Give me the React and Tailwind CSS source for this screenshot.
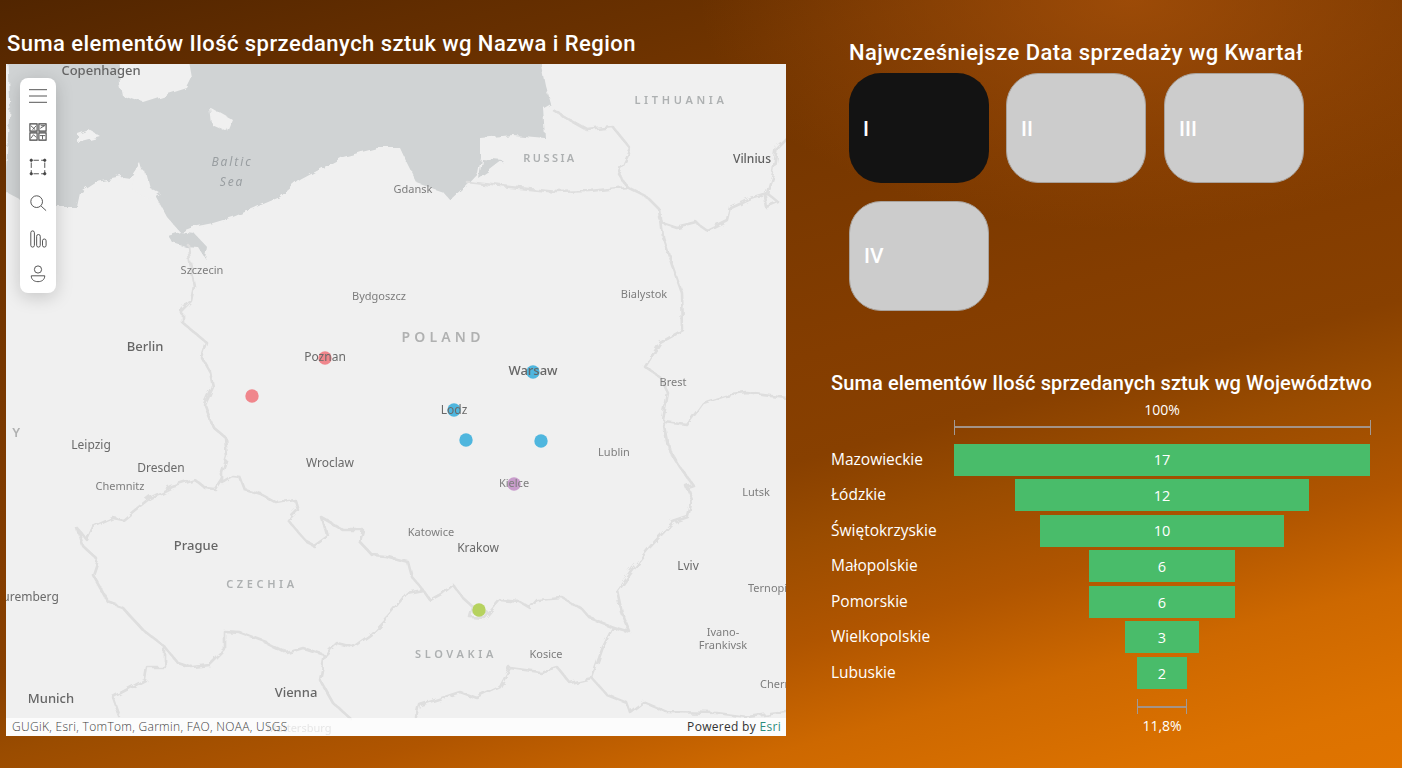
const borders = [
  // Odra, southern border of Poland, eastern border
  "M188 245 L190 262 L195 287 L192 302 L182 312 L182 322 L195 333 L207 343 L202 358 L210 372 L213 387 L205 405 L213 427 L225 437 L227 457 L222 473 L222 482 L232 476 L240 477 L245 490 L262 495 L277 503 L295 500 L298 510 L288 520 L298 532 L307 542 L313 545 L327 535 L322 518 L343 530 L363 530 L360 542 L372 555 L385 556 L408 562 L412 577 L423 590 L430 600 L443 593 L453 585 L463 598 L473 607 L470 617 L485 618 L500 600 L520 602 L530 608 L537 600 L563 598 L583 610 L590 618 L613 627 L630 632 L622 613 L617 590 L633 568 L650 547 L673 522 L688 517 L692 500 L687 487 L693 485 L680 467 L668 447 L663 420 L668 393 L660 377 L645 367 L660 343 L683 330 L682 293 L672 265 L663 237 L660 210 L647 197 L627 187 L590 191 L557 192 L510 187 L467 182",
  // Lithuania / Kaliningrad
  "M627 187 L618 173 L630 148 L613 127 L588 130 L570 120 L553 110",
  // Lithuania / Belarus
  "M660 218 L662 223 L677 228 L697 223 L707 230 L727 220 L730 207 L750 198 L767 193 L773 173 L777 147 L787 137",
  "M767 193 L779 203 L767 208 L765 196",
  // Belarus / Ukraine
  "M665 422 L687 425 L703 403 L725 396 L747 393 L787 398",
  // Germany / Czechia
  "M195 480 L172 487 L150 498 L135 510 L123 520 L113 518 L93 527 L87 540 L77 528 L82 545 L98 560 L93 575 L108 602 L122 607 L143 630 L165 647 L177 662 L192 667 L210 665 L225 650 L225 632 L240 633 L267 643 L287 653 L303 648 L325 655 L337 643 L353 647 L370 635 L387 617 L407 593 L423 590",
  // Germany / Austria
  "M165 648 L165 667 L147 667 L145 680 L113 697 L120 717",
  // Austria / Slovakia
  "M325 655 L320 680 L333 703 L350 718",
  // Slovakia / Hungary
  "M417 718 L420 705 L460 692 L477 698 L500 687 L510 668 L540 672 L557 667 L570 683 L592 678 L603 647 L613 627",
  // Hungary / Ukraine / Romania
  "M592 678 L607 695 L627 703 L630 712 L643 702 L667 712 L717 713 L747 717 L787 712",
  // Czech-Poland loop
  "M195 480 L205 488 L215 489 L222 478",
];

const labels = [
  ["Copenhagen", 101, 75, "big"],
  ["Gdansk", 413, 193, "small"],
  ["RUSSIA", 550, 162, "region"],
  ["LITHUANIA", 681, 104, "country"],
  ["Vilnius", 752, 163, "city"],
  ["Szczecin", 202, 274, "small"],
  ["Bydgoszcz", 379, 300, "small"],
  ["Bialystok", 644, 298, "small"],
  ["Berlin", 145, 351, "big"],
  ["Poznan", 325, 361, "name"],
  ["Warsaw", 533, 375, "big"],
  ["Brest", 673, 386, "small"],
  ["Lodz", 454, 414, "name"],
  ["Leipzig", 91, 449, "name"],
  ["Dresden", 161, 472, "name"],
  ["Lublin", 614, 456, "small"],
  ["Wroclaw", 330, 467, "name"],
  ["Kielce", 514, 487, "small"],
  ["Chemnitz", 120, 490, "small"],
  ["Lutsk", 756, 496, "small"],
  ["Katowice", 431, 536, "small"],
  ["Krakow", 478, 552, "name"],
  ["Prague", 196, 550, "big"],
  ["Lviv", 688, 570, "name"],
  ["CZECHIA", 262, 588, "country"],
  ["Ternopil", 769, 592, "small"],
  ["Nuremberg", 26, 601, "name"],
  ["Ivano-", 723, 636, "small"],
  ["Frankivsk", 723, 649, "small"],
  ["SLOVAKIA", 456, 658, "country"],
  ["Kosice", 546, 658, "small"],
  ["Chernivtsi", 786, 688, "small"],
  ["Munich", 51, 703, "big"],
  ["Vienna", 296, 697, "big"],
  ["Mattersburg", 299, 732, "small"],
];

const labelStyles = {
  small: "fill-[#7d7d7d] text-[11px]",
  name: "fill-[#6a6a6a] text-[12px]",
  city: "fill-[#5f5f5f] text-[12px] font-medium",
  big: "fill-[#666666] text-[13px] font-medium",
  region: "fill-[#adb0b1] text-[11px] font-semibold tracking-[0.22em]",
  country: "fill-[#adb0b1] text-[11px] font-semibold tracking-[0.33em]",
};

const pins = [
  [252, 396, "#f0868c"],
  [325, 358, "#f0868c"],
  [533, 372, "#4fb6de"],
  [454, 410, "#4fb6de"],
  [466, 440, "#4fb6de"],
  [541, 441, "#4fb6de"],
  [514, 484, "#c89ccb"],
  [479, 610, "#b6d25f"],
];

const funnel = [
  ["Mazowieckie", 17, "w-[416px]"],
  ["Łódzkie", 12, "w-[294px]"],
  ["Świętokrzyskie", 10, "w-[244px]"],
  ["Małopolskie", 6, "w-[146px]"],
  ["Pomorskie", 6, "w-[146px]"],
  ["Wielkopolskie", 3, "w-[74px]"],
  ["Lubuskie", 2, "w-[50px]"],
];

const Title = ({ children, className }) => (
  <h2 className={"font-['Roboto',sans-serif] font-medium text-white whitespace-nowrap " + className}>
    {children}
  </h2>
);

const Bracket = ({ className }) => (
  <div className={"h-[15px] flex items-center border-x border-[#a39a94] " + className}>
    <div className="h-[2px] w-full bg-[#a39388]" />
  </div>
);

const ToolIcon = ({ children }) => (
  <div className="h-[35.7px] flex items-center justify-center">
    <svg width="18" height="18" viewBox="0 0 20 20" fill="none" stroke="#444" strokeWidth="1">
      {children}
    </svg>
  </div>
);

const Toolbar = () => (
  <div className="absolute left-[14px] top-[14px] w-[36px] h-[215px] bg-white rounded-lg shadow-[0_4px_18px_rgba(0,0,0,0.18)] flex flex-col">
    <ToolIcon>
      <path d="M0 3H20M0 10H20M0 17H20" />
    </ToolIcon>
    <ToolIcon>
      <path d="M1 1H9V9H1ZM11 1H19V9H11ZM1 11H9V19H1ZM11 11H19V19H11Z" strokeWidth="1.2" />
      <path d="M2 3L7 7.5M4 7.5L8 3M12.5 6L17 3M13 3H18M2 17L5 13L8 16M12 14H18M15 14V18" strokeWidth="0.9" />
    </ToolIcon>
    <ToolIcon>
      <path d="M3 2.5H17M3 17.5H17M2.5 3V17M17.5 3V17" strokeDasharray="6 2.5" strokeDashoffset="-2" />
      <circle cx="2.5" cy="2.5" r="1.3" fill="#444" />
      <circle cx="17.5" cy="2.5" r="1.3" fill="#444" />
      <circle cx="2.5" cy="17.5" r="1.3" fill="#444" />
      <circle cx="17.5" cy="17.5" r="1.3" fill="#444" />
    </ToolIcon>
    <ToolIcon>
      <circle cx="8.5" cy="8.5" r="6.5" />
      <path d="M13.5 13.5L19 18.5" />
    </ToolIcon>
    <ToolIcon>
      <rect x="2" y="1" width="4" height="18" rx="2" />
      <rect x="8.5" y="5" width="4" height="14" rx="2" />
      <rect x="15" y="10" width="4" height="9" rx="2" />
    </ToolIcon>
    <ToolIcon>
      <circle cx="10" cy="5" r="4" />
      <path d="M2.5 12H17.5C17.5 16.5 14 18.5 10 18.5C6 18.5 2.5 16.5 2.5 12Z" />
    </ToolIcon>
  </div>
);

const MapCard = () => (
  <div className="relative w-[780px] h-[672px] bg-[#f0f0f0] overflow-hidden">
    <svg width="780" height="672" viewBox="6 64 780 672" className="block font-['Noto_Sans',sans-serif]">
      <defs>
        <filter id="rough" x="-5%" y="-5%" width="110%" height="110%">
          <feTurbulence type="fractalNoise" baseFrequency="0.09" numOctaves="3" seed="4" />
          <feDisplacementMap in="SourceGraphic" scale="7" />
          <feGaussianBlur stdDeviation="0.5" />
        </filter>
      </defs>
      <g filter="url(#rough)">
        <path
          fill="#d0d3d4"
          d="M-20 50 L538 50 L545 85 L550 103 L543 107 L545 138 L513 135 L480 138 L480 157 L477 173 L463 188 L450 200 L443 192 L417 183 L407 163 L400 148 L377 148 L343 157 L300 180 L280 197 L233 217 L213 223 L193 227 L180 232 L167 217 L155 195 L148 190 L140 163 L130 178 L123 177 L97 182 L80 193 L77 207 L57 207 L30 205 L7 193 L-20 190 Z"
        />
        <path
          fill="#f0f0f0"
          d="M118 50 L120 85 L122 95 L143 102 L165 95 L187 88 L192 78 L187 50 Z M210 107 L233 120 L228 132 L212 125 Z M77 133 L88 129 L100 136 L85 140 L77 142 Z M-20 50 L8 50 L10 100 L6 170 L-20 170 Z M137 170 L146 172 L150 188 L160 193 L150 200 L132 190 Z"
        />
        <path fill="#d0d3d4" d="M168 236 L180 232 L195 234 L207 247 L205 258 L198 247 L185 246 L172 242 Z M481 158 L503 160 L490 170 L478 178 Z" />
        <g fill="none" stroke="#dedede" strokeWidth="2.6" strokeLinejoin="round" strokeLinecap="round">
          {borders.map((d, i) => (
            <path key={i} d={d} />
          ))}
        </g>
      </g>
      <g className="blur-[0.35px]">
        {pins.map(([x, y, color], i) => (
          <circle key={i} cx={x} cy={y} r="6.7" fill={color} />
        ))}
        <g textAnchor="middle">
          {labels.map(([text, x, y, kind]) => (
            <text key={text} x={x} y={y} className={labelStyles[kind]}>
              {text}
            </text>
          ))}
          <text x="232" y="166" className="fill-[#999ea1] text-[12px] italic tracking-[0.16em]">Baltic</text>
          <text x="232" y="186" className="fill-[#999ea1] text-[12px] italic tracking-[0.16em]">Sea</text>
          <text x="443" y="342" className="fill-[#b0b1b1] text-[14px] font-semibold tracking-[0.3em]">POLAND</text>
          <text x="24" y="437" textAnchor="end" className="fill-[#b0b1b1] text-[13px] font-semibold tracking-[0.3em]">N Y</text>
        </g>
      </g>
    </svg>
    <Toolbar />
    <div className="absolute inset-x-0 bottom-0 h-[18px] bg-white/80 flex items-center justify-between pl-[6px] pr-[5px] font-['Open_Sans',sans-serif] font-light text-[12px] tracking-[0.3px] text-[#3d3d3d]">
      <span>GUGiK, Esri, TomTom, Garmin, FAO, NOAA, USGS</span>
      <span className="text-[#333] font-normal tracking-[0.3px]">
        Powered by <span className="text-[#2c8c7c]">Esri</span>
      </span>
    </div>
  </div>
);

const QuarterButton = ({ label, active }) => (
  <div
    className={
      "w-[140px] h-[110px] rounded-[32px] flex items-center pl-[14px] pt-[3px] font-['Roboto',sans-serif] font-medium text-[21px] text-white " +
      (active ? "bg-[#131313]" : "bg-[#cccccc] border border-[#a9a29c]")
    }
  >
    {label}
  </div>
);

const Funnel = () => (
  <div className="font-['Open_Sans',sans-serif] text-white">
    <div className="ml-[123px] w-[416px] text-center text-[14px] leading-[20px] mt-[2px]">100%</div>
    <Bracket className="ml-[123px] w-[417px]" />
    <div className="mt-[9px] flex flex-col gap-[3.6px]">
      {funnel.map(([name, value, width]) => (
        <div key={name} className="flex h-[32px]">
          <div className="w-[123px] text-[15.5px] leading-[30px] whitespace-nowrap">{name}</div>
          <div className="w-[416px] flex justify-center">
            <div className={"h-full flex items-center justify-center bg-[#49bc6a] text-[14.5px] pt-[1px] " + width}>
              {value}
            </div>
          </div>
        </div>
      ))}
    </div>
    <Bracket className="ml-[306px] w-[50px] mt-[10px]" />
    <div className="ml-[123px] w-[416px] text-center text-[14px] leading-[20px] mt-[2px]">11,8%</div>
  </div>
);

export default function App() {
  return (
    <div className="w-[1402px] h-[768px] overflow-hidden flex bg-[radial-gradient(ellipse_430px_230px_at_1130px_0px,rgba(170,82,10,0.75),rgba(170,82,10,0)),linear-gradient(165deg,#512500_0%,#622d00_11%,#703400_22%,#843d00_50%,#884000_59%,#9a4c00_66%,#b05500_75%,#cd6800_84%,#dc7200_94%,#e07400_100%)]">
      <section className="ml-[6px] w-[780px] shrink-0">
        <Title className="h-[64px] pt-[29px] pl-[1px] text-[22px] leading-[30px] tracking-[0.45px]">
          Suma elementów Ilość sprzedanych sztuk wg Nazwa i Region
        </Title>
        <MapCard />
      </section>
      <section className="ml-[45px] flex-1">
        <div className="ml-[18px] pt-[38px]">
          <Title className="h-[35px] text-[22px] leading-[30px] tracking-[0.45px]">
            Najwcześniejsze Data sprzedaży wg Kwartał
          </Title>
          <div className="grid grid-cols-[157px_158px_140px] gap-y-[17.5px]">
            <QuarterButton label="I" active />
            <QuarterButton label="II" />
            <QuarterButton label="III" />
            <QuarterButton label="IV" />
          </div>
        </div>
        <Title className="mt-[57px] text-[20px] leading-[30px] tracking-[0.1px]">
          Suma elementów Ilość sprzedanych sztuk wg Województwo
        </Title>
        <Funnel />
      </section>
    </div>
  );
}
